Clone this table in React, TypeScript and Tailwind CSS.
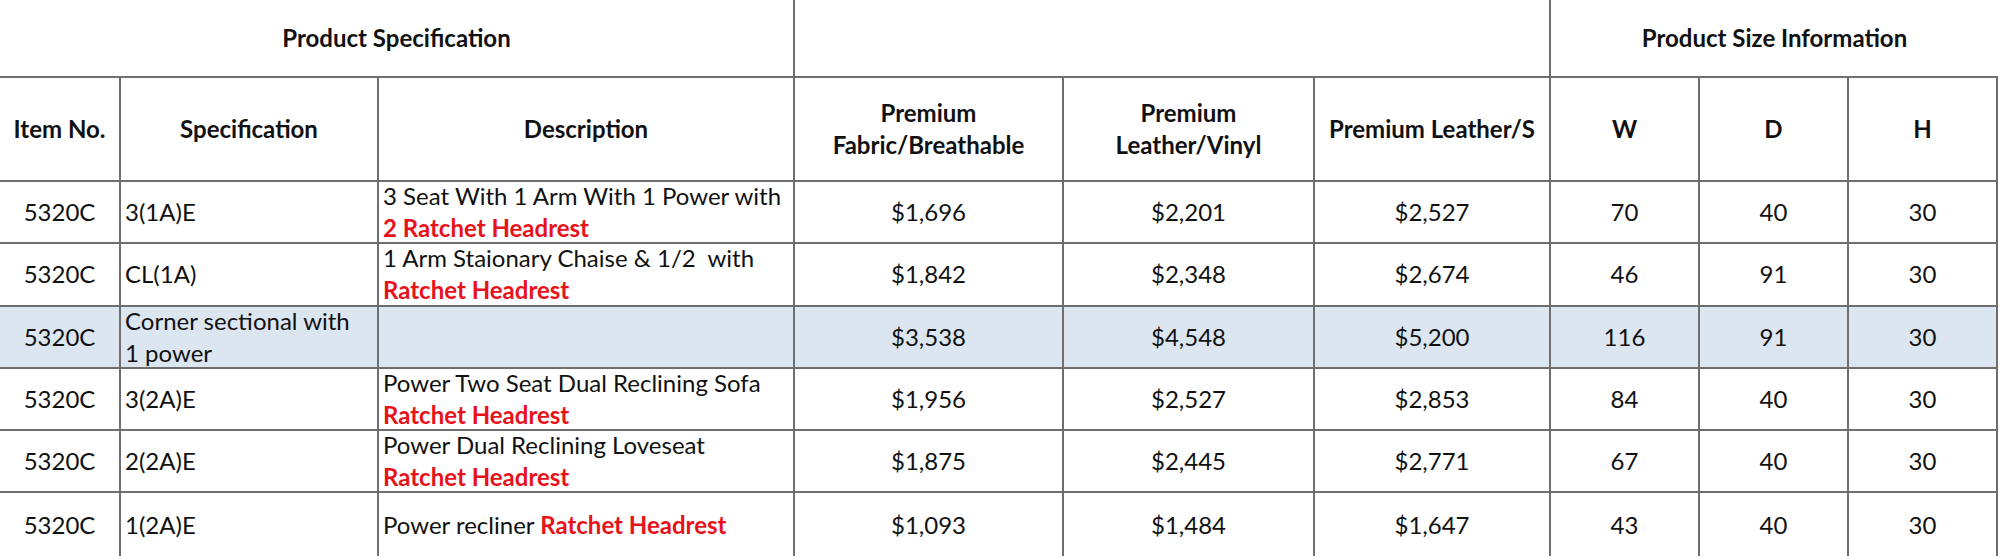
import React from "react";

type Row = {
  item: string;
  spec: string[];
  desc: React.ReactNode;
  prices: string[];
  size: string[];
  shaded?: boolean;
};

const Red = ({ children }: { children: React.ReactNode }) => (
  <span className="font-bold text-[#e8121a]">{children}</span>
);

const rows: Row[] = [
  {
    item: "5320C",
    spec: ["3(1A)E"],
    desc: (
      <>
        3 Seat With 1 Arm With 1 Power with
        <br />
        <Red>2 Ratchet Headrest</Red>
      </>
    ),
    prices: ["$1,696", "$2,201", "$2,527"],
    size: ["70", "40", "30"],
  },
  {
    item: "5320C",
    spec: ["CL(1A)"],
    desc: (
      <>
        1 Arm Staionary Chaise &amp; 1/2&nbsp; with
        <br />
        <Red>Ratchet Headrest</Red>
      </>
    ),
    prices: ["$1,842", "$2,348", "$2,674"],
    size: ["46", "91", "30"],
  },
  {
    item: "5320C",
    spec: ["Corner sectional with", "1 power"],
    desc: null,
    prices: ["$3,538", "$4,548", "$5,200"],
    size: ["116", "91", "30"],
    shaded: true,
  },
  {
    item: "5320C",
    spec: ["3(2A)E"],
    desc: (
      <>
        Power Two Seat Dual Reclining Sofa
        <br />
        <Red>Ratchet Headrest</Red>
      </>
    ),
    prices: ["$1,956", "$2,527", "$2,853"],
    size: ["84", "40", "30"],
  },
  {
    item: "5320C",
    spec: ["2(2A)E"],
    desc: (
      <>
        Power Dual Reclining Loveseat
        <br />
        <Red>Ratchet Headrest</Red>
      </>
    ),
    prices: ["$1,875", "$2,445", "$2,771"],
    size: ["67", "40", "30"],
  },
  {
    item: "5320C",
    spec: ["1(2A)E"],
    desc: (
      <>
        Power recliner <Red>Ratchet Headrest</Red>
      </>
    ),
    prices: ["$1,093", "$1,484", "$1,647"],
    size: ["43", "40", "30"],
  },
];

const line = "border-[#6e6e6e]";

export default function App() {
  return (
    <main className="w-[2000px] h-[559px] overflow-hidden bg-white text-[#111] font-['Lato',sans-serif] text-[24px] leading-[32px]">
      <div className="grid grid-cols-[121px_258px_416px_269px_251px_236px_149px_149px_149px] w-[1998px]">
        {/* top header band */}
        <div className={`col-span-3 h-[78px] flex items-center justify-center font-bold border-r-2 border-b-2 ${line}`}>
          Product Specification
        </div>
        <div className={`col-span-3 h-[78px] border-r-2 border-b-2 ${line}`} />
        <div className={`col-span-3 h-[78px] flex items-center justify-center font-bold border-b-2 ${line}`}>
          Product Size Information
        </div>

        {/* column headers */}
        {[
          ["Item No."],
          ["Specification"],
          ["Description"],
          ["Premium", "Fabric/Breathable"],
          ["Premium", "Leather/Vinyl"],
          ["Premium Leather/S"],
          ["W"],
          ["D"],
          ["H"],
        ].map((h, i) => (
          <div
            key={i}
            className={`h-[104px] flex flex-col items-center justify-center text-center font-bold whitespace-nowrap border-r-2 border-b-2 ${line}`}
          >
            {h.map((t) => (
              <span key={t}>{t}</span>
            ))}
          </div>
        ))}

        {/* data */}
        {rows.map((r, idx) => {
          const bg = r.shaded ? "bg-[#dce6f1]" : "bg-white";
          const bottom = idx < rows.length - 1 ? "border-b-2" : "";
          const cell = `h-[62.3px] border-r-2 ${bottom} ${line} ${bg}`;
          return (
            <React.Fragment key={idx}>
              <div className={`${cell} flex items-center justify-center`}>{r.item}</div>
              <div className={`${cell} flex flex-col justify-center pl-1 whitespace-nowrap`}>
                {r.spec.map((s) => (
                  <span key={s}>{s}</span>
                ))}
              </div>
              <div className={`${cell} flex items-center pl-1 whitespace-nowrap`}>
                <div>{r.desc}</div>
              </div>
              {r.prices.map((p) => (
                <div key={p} className={`${cell} flex items-center justify-center`}>
                  {p}
                </div>
              ))}
              {r.size.map((s, j) => (
                <div key={j} className={`${cell} flex items-center justify-center`}>
                  {s}
                </div>
              ))}
            </React.Fragment>
          );
        })}
      </div>
    </main>
  );
}
